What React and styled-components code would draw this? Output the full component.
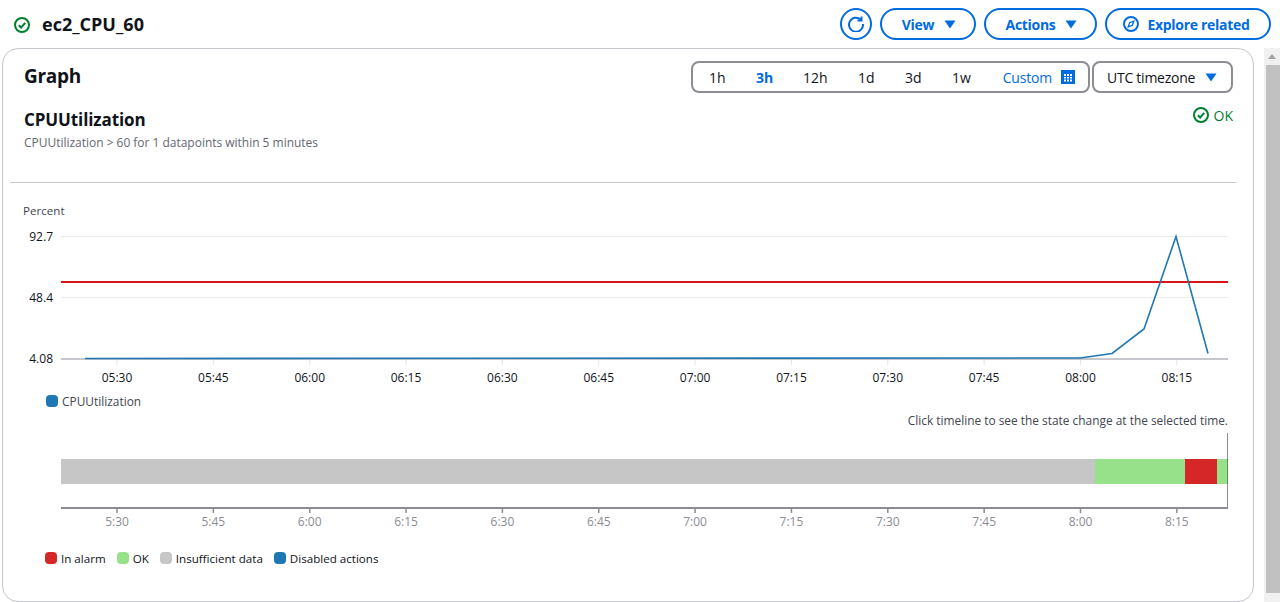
import React from 'react';
import styled, { createGlobalStyle } from 'styled-components';

const GlobalStyle = createGlobalStyle`
  html, body { margin: 0; padding: 0; background: #fff; overflow: hidden; }
  body { font-family: "Open Sans", "Noto Sans", sans-serif; color: #0f141a; }
`;

const Page = styled.div`
  display: flex;
  width: 1280px;
  height: 602px;
  overflow: hidden;
`;
const Main = styled.div`
  width: 1252px;
  margin-left: 2px;
  display: flex;
  flex-direction: column;
`;
const TopBar = styled.div`
  height: 48px;
  box-sizing: border-box;
  padding: 8px 0 0 12px;
  margin-right: -17px;
  display: flex;
  align-items: flex-start;
  justify-content: space-between;
`;
const TitleWrap = styled.div`
  display: flex;
  align-items: center;
  gap: 12px;
  height: 32px;
  svg { margin-top: 2px; }
`;
const Title = styled.h1`
  margin: 0;
  font-size: 18px;
  font-weight: 700;
  line-height: 32px;
`;
const Actions = styled.div`
  display: flex;
  gap: 8px;
`;
const PillButton = styled.button`
  height: 32px;
  box-sizing: border-box;
  border: 2px solid #006ce0;
  border-radius: 16px;
  background: #fff;
  color: #006ce0;
  font: 700 14px "Open Sans", sans-serif;
  letter-spacing: -0.3px;
  padding: ${p => p.$pad || '0 0 0 2px'};
  width: ${p => p.$w}px;
  display: flex;
  align-items: center;
  justify-content: center;
  gap: ${p => p.$gap || 10}px;
`;
const IconCircle = styled(PillButton)`
  width: 32px;
  padding: 0;
`;
const Caret = styled.svg`
  width: 12px;
  height: 9px;
  fill: ${p => p.$color || '#006ce0'};
  flex: none;
`;
const Card = styled.div`
  flex: 1;
  box-sizing: border-box;
  border: 1px solid #c6c6cd;
  border-radius: 16px;
  padding: 12px 20px 0 7px;
  display: flex;
  flex-direction: column;
`;
const CardHead = styled.div`
  display: flex;
  justify-content: space-between;
  padding-left: 14px;
  height: 32px;
`;
const CardTitle = styled.h2`
  margin: 0;
  font-size: 19px;
  font-weight: 700;
  line-height: 30px;
  letter-spacing: -0.3px;
`;
const Controls = styled.div`
  display: flex;
  gap: 2px;
`;
const Segment = styled.div`
  width: 399px;
  height: 32px;
  box-sizing: border-box;
  border: 2px solid #8c8c94;
  border-radius: 8px;
  display: flex;
  align-items: center;
  padding: 0 13px 0 16px;
  font-size: 14px;
`;
const Range = styled.span`
  width: ${p => p.$w}px;
  font-weight: ${p => (p.$active ? 700 : 400)};
  color: ${p => (p.$active ? '#006ce0' : '#0f141a')};
`;
const Custom = styled.span`
  margin-left: auto;
  color: #006ce0;
  display: flex;
  align-items: center;
  gap: 9px;
  letter-spacing: -0.2px;
`;
const TimeZone = styled.div`
  width: 141px;
  height: 32px;
  box-sizing: border-box;
  border: 2px solid #8c8c94;
  border-radius: 8px;
  display: flex;
  align-items: center;
  justify-content: space-between;
  padding: 0 14px 0 13px;
  font-size: 14px;
  letter-spacing: -0.25px;
`;
const MetricHead = styled.div`
  display: flex;
  justify-content: space-between;
  padding: 14px 0 0 14px;
  height: 90px;
  box-sizing: border-box;
  border-bottom: 1px solid #c6c6cd;
  margin-right: -3px;
`;
const MetricTitle = styled.h3`
  margin: 0;
  font-size: 17px;
  font-weight: 700;
  line-height: 26px;
  letter-spacing: -0.1px;
`;
const MetricSub = styled.div`
  font-size: 12px;
  line-height: 18px;
  margin-top: 1px;
  letter-spacing: -0.02px;
  color: #656871;
`;
const Status = styled.div`
  display: flex;
  align-items: center;
  gap: 5px;
  color: #00802f;
  font-size: 14px;
  height: 18px;
  margin-right: 3px;
  margin-top: -1px;
`;
const ChartSvg = styled.svg`
  display: block;
  width: 1223px;
  height: 209px;
  flex: none;
`;
const AxisLabel = styled.text`
  font: ${p => p.$size || 12}px "Open Sans", sans-serif;
  fill: ${p => p.$fill || '#0f141a'};
`;
const LegendRow = styled.div`
  display: flex;
  align-items: center;
  gap: 11px;
  padding-left: ${p => p.$inset}px;
  font-size: ${p => p.$size || 12}px;
  height: 18px;
`;
const LegendItem = styled.span`
  display: flex;
  align-items: center;
  gap: 4px;
  color: ${p => p.$color || '#0f141a'};
`;
const Swatch = styled.i`
  width: 12px;
  height: 12px;
  border-radius: 4px;
  background: ${p => p.$bg};
  flex: none;
`;
const Hint = styled.div`
  text-align: right;
  font-size: 11.9px;
  line-height: 16px;
  color: #424650;
  margin: 2px 0 1px;
  padding-right: 5px;
`;
const TimelineSvg = styled.svg`
  display: block;
  width: 1223px;
  height: 109px;
  margin-bottom: 11px;
  flex: none;
`;
const Scrollbar = styled.div`
  width: 16px;
  margin-left: 10px;
  margin-top: 48px;
  background: #f1f1f1;
  display: flex;
  flex-direction: column;
`;
const ScrollArrow = styled.div`
  height: 17px;
  display: flex;
  align-items: center;
  justify-content: center;
`;
const ScrollThumb = styled.div`
  height: 528px;
  background: #c1c1c1;
  margin-left: 2px;
`;

const ticks = ['5:30', '5:45', '6:00', '6:15', '6:30', '6:45', '7:00', '7:15', '7:30', '7:45', '8:00', '8:15'];
const tickX = i => 107 + i * 96.35;
const chartTop = 183;

function CheckCircle({ size }) {
  return (
    <svg width={size} height={size} viewBox="0 0 16 16" fill="none" stroke="#00802f" strokeWidth="2">
      <circle cx="8" cy="8" r="7" />
      <path d="M4.8 8.2 7.2 10.5 11.2 5.8" />
    </svg>
  );
}

function Down({ color }) {
  return (
    <Caret viewBox="0 0 12 9" $color={color}>
      <path d="M0.5 0.5h11L6 8.5z" />
    </Caret>
  );
}

function MetricChart() {
  const y = v => v - chartTop;
  const line = [[85, 358.5], [1080, 358], [1112, 353.5], [1144, 329], [1176, 236.5], [1208, 353.5]]
    .map(([a, b]) => `${a - 10},${b - chartTop}`)
    .join(' ');
  return (
    <ChartSvg viewBox="0 0 1223 209">
      <AxisLabel x="13" y={y(215)} $fill="#424650" $size={11.6}>Percent</AxisLabel>
      {[[236.5, '92.7'], [297.5, '48.4'], [359, '4.08']].map(([gy, label]) => (
        <g key={label}>
          <line x1="51" x2="1218" y1={y(gy)} y2={y(gy)} stroke={gy === 359 ? '#c6c6cd' : '#ececee'} strokeWidth={gy === 359 ? 2 : 1} />
          <AxisLabel x="43" y={y(gy + 4)} textAnchor="end">{label}</AxisLabel>
        </g>
      ))}
      <line x1="51" x2="1218" y1={y(282)} y2={y(282)} stroke="#d91515" strokeWidth="2" />
      <polyline points={line} fill="none" stroke="#1f77b4" strokeWidth="1.6" />
      {ticks.map((t, i) => (
        <g key={t}>
          <line x1={tickX(i)} x2={tickX(i)} y1={y(360)} y2={y(365)} stroke="#e4e4e7" />
          <AxisLabel x={tickX(i)} y={y(382)} textAnchor="middle">{`0${t}`}</AxisLabel>
        </g>
      ))}
    </ChartSvg>
  );
}

function Timeline() {
  const y = v => v - 429;
  return (
    <TimelineSvg viewBox="0 0 1223 109">
      <rect x="51" y={y(459)} width="1035" height="25" fill="#c6c6c6" />
      <rect x="1085" y={y(459)} width="90" height="25" fill="#98e18b" />
      <rect x="1175" y={y(459)} width="32" height="25" fill="#d62728" />
      <rect x="1207" y={y(459)} width="11" height="25" fill="#98e18b" />
      <line x1="51" x2="1218" y1={y(508)} y2={y(508)} stroke="#8c8c94" strokeWidth="2" />
      <line x1="1217.5" x2="1217.5" y1={y(433)} y2={y(508)} stroke="#8c8c94" />
      <line x1="1217.5" x2="1217.5" y1={y(459)} y2={y(484)} stroke="#5a8f52" />
      {ticks.map((t, i) => (
        <g key={t}>
          <line x1={tickX(i)} x2={tickX(i)} y1={y(509)} y2={y(513)} stroke="#8c8c94" strokeWidth="1.5" />
          <AxisLabel x={tickX(i)} y={y(526)} textAnchor="middle" $fill="#8c8c94">{t}</AxisLabel>
        </g>
      ))}
    </TimelineSvg>
  );
}

export default function App() {
  return (
    <Page>
      <GlobalStyle />
      <Main>
        <TopBar>
          <TitleWrap>
            <CheckCircle size={16} />
            <Title>ec2_CPU_60</Title>
          </TitleWrap>
          <Actions>
            <IconCircle aria-label="Refresh">
              <svg width="16" height="16" viewBox="0 0 16 16" fill="none" stroke="#006ce0" strokeWidth="2">
                <path d="M12.8 3.6A7 7 0 1 0 15 8" />
                <path d="M13.5 0.5V4.5H9.5" />
              </svg>
            </IconCircle>
            <PillButton $w={96}>View <Down /></PillButton>
            <PillButton $w={113}>Actions <Down /></PillButton>
            <PillButton $w={166} $gap={8} $pad="0 3px 0 0">
              <svg width="16" height="16" viewBox="0 0 16 16" fill="none" stroke="#006ce0" strokeWidth="2">
                <circle cx="8" cy="8" r="7" />
                <path d="M10.8 5.2 9.3 9.3 5.2 10.8 6.7 6.7z" strokeWidth="1.3" />
              </svg>
              Explore related
            </PillButton>
          </Actions>
        </TopBar>
        <Card>
          <CardHead>
            <CardTitle>Graph</CardTitle>
            <Controls>
              <Segment>
                <Range $w={47}>1h</Range>
                <Range $w={47} $active>3h</Range>
                <Range $w={55}>12h</Range>
                <Range $w={47}>1d</Range>
                <Range $w={47}>3d</Range>
                <Range $w={40}>1w</Range>
                <Custom>
                  Custom
                  <svg width="14" height="14" viewBox="0 0 14 14">
                    <path fillRule="evenodd" fill="#006ce0" d="M0 0h14v14H0zM3 4v2h2V4zM6 4v2h2V4zM9 4v2h2V4zM3 7v1.5h2V7zM6 7v1.5h2V7zM9 7v1.5h2V7zM3 9.5v2h2v-2zM6 9.5v2h2v-2zM9 9.5v2h2v-2z" />
                  </svg>
                </Custom>
              </Segment>
              <TimeZone>UTC timezone <Down /></TimeZone>
            </Controls>
          </CardHead>
          <MetricHead>
            <div>
              <MetricTitle>CPUUtilization</MetricTitle>
              <MetricSub>CPUUtilization &gt; 60 for 1 datapoints within 5 minutes</MetricSub>
            </div>
            <Status><CheckCircle size={16} />OK</Status>
          </MetricHead>
          <MetricChart />
          <LegendRow $inset={36} $size={11.9}>
            <LegendItem $color="#424650"><Swatch $bg="#1f77b4" />CPUUtilization</LegendItem>
          </LegendRow>
          <Hint>Click timeline to see the state change at the selected time.</Hint>
          <Timeline />
          <LegendRow $inset={35} $size={11.6}>
            <LegendItem><Swatch $bg="#d62728" />In alarm</LegendItem>
            <LegendItem><Swatch $bg="#98e18b" />OK</LegendItem>
            <LegendItem><Swatch $bg="#c6c6c6" />Insufficient data</LegendItem>
            <LegendItem><Swatch $bg="#1f77b4" />Disabled actions</LegendItem>
          </LegendRow>
        </Card>
      </Main>
      <Scrollbar>
        <ScrollArrow>
          <svg width="8" height="5" viewBox="0 0 8 5"><path d="M0 5 4 0l4 5z" fill="#a3a3a3" /></svg>
        </ScrollArrow>
        <ScrollThumb />
      </Scrollbar>
    </Page>
  );
}
